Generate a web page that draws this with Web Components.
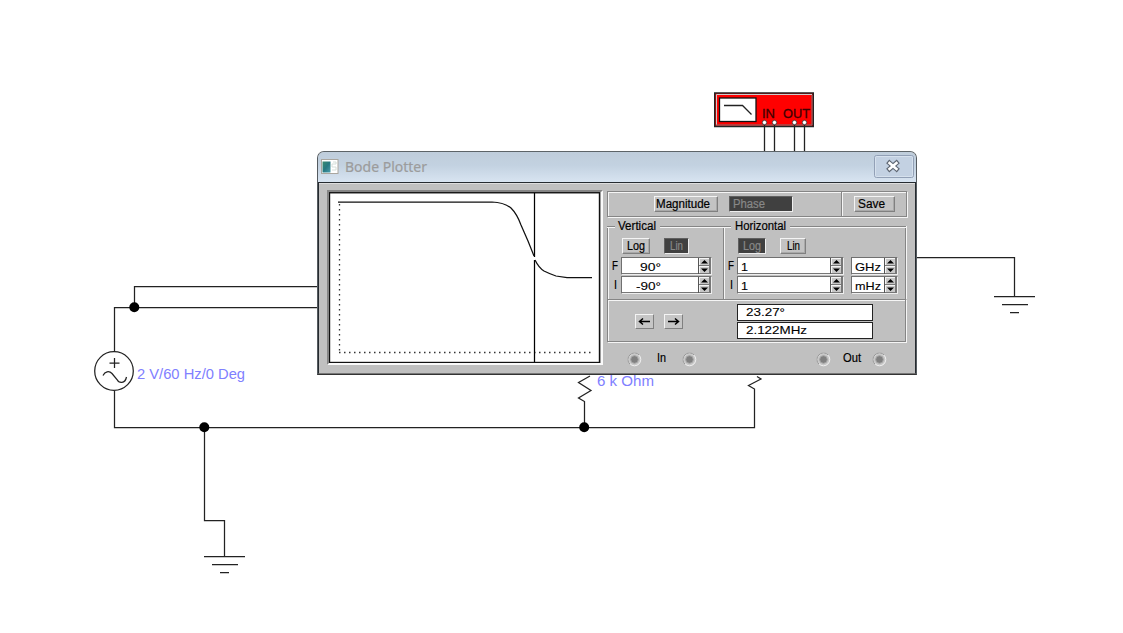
<!DOCTYPE html>
<html lang="en"><head><meta charset="utf-8"><title>Bode Plotter</title>
<style>
html,body{margin:0;background:#fff}
body{width:1123px;height:633px;overflow:hidden;font-family:"Liberation Sans",Arial,sans-serif}
</style></head><body>
<circuit-board><bode-window></bode-window></circuit-board>
<script>
const define=(name,render)=>customElements.define(name,class extends HTMLElement{
  connectedCallback(){
    if(this.shadowRoot)return;
    const t=document.createElement('template');
    t.innerHTML=render(this);
    this.attachShadow({mode:'open'}).append(t.content.cloneNode(true));
  }
});
const at=(e,n,d='')=>e.getAttribute(n)??d;

/* text run with a fixed advance width */
define('fit-text',e=>{
  const w=+at(e,'w'),s=+at(e,'size','12');
  return `<style>:host{display:block;flex:none;width:${w}px;height:14px}svg{display:block;overflow:visible}</style>
  <svg width="${w}" height="14"><text x="0" y="11" font-size="${s}" fill="${at(e,'color','#000')}" stroke="${at(e,'color','#000')}" stroke-width="${at(e,'bold','.2')}" font-family="${at(e,'font','Liberation Sans')}, sans-serif" textLength="${w}" lengthAdjust="spacingAndGlyphs">${at(e,'text')}</text></svg>`});

define('push-button',e=>{
  const dark=e.hasAttribute('down');
  return `<style>:host{display:flex;flex:none;box-sizing:border-box;width:${at(e,'w')}px;height:16px;align-items:center;justify-content:center;
  background:${dark?'#404040':'#c3c3c3'};border:1px solid;border-color:${dark?'#606060 #eee #eee #606060':'#f4f4f4 #808080 #808080 #f4f4f4'};
  box-shadow:${dark?'none':'inset -1px -1px #a9a9a9'}}</style>
  <fit-text text="${at(e,'text')}" w="${at(e,'tw')}" color="${dark?'#888':'#000'}"></fit-text>`});

define('arrow-button',e=>`<style>:host{display:block;flex:none;box-sizing:border-box;width:19px;height:15px;background:#c6c6c6;border:1px solid;border-color:#f4f4f4 #808080 #808080 #f4f4f4}svg{display:block;${e.hasAttribute('right')?'transform:scaleX(-1)':''}}</style>
  <svg width="17" height="13"><path d="M3.5 6.5H14M7 3.5L3.5 6.5 7 9.5" fill="none" stroke="#000" stroke-width="1.5"/></svg>`);

define('spin-field',e=>`<style>
  :host{display:flex;flex:none;box-sizing:border-box;width:${at(e,'w')}px;height:18px;border:1px solid #707070;border-right-color:#eee;border-bottom-color:#eee;background:#fff}
  .v{flex:1;box-sizing:border-box;padding:2px 0 0 ${at(e,'pad','3')}px;border-bottom:1px solid #777}
  .s{width:13px;box-sizing:border-box;border-left:1px solid #555;border-right:1px solid #777;background:#c8c8c8}
  svg{display:block}</style>
  <div class="v"><fit-text text="${at(e,'text')}" w="${at(e,'tw')}" size="11.5" bold="0.1"></fit-text></div>
  <div class="s"><svg width="11" height="16"><path d="M0 .5H10M.5 0V16M0 8.5H10" stroke="#f4f4f4" fill="none"/><path d="M0 7.5H11M0 15.5H11M10.5 0V16" stroke="#777"/><path d="M2 5.5L5.5 2 9 5.5ZM2 10.5H9L5.5 14Z"/></svg></div>`);

define('read-out',e=>`<style>:host{display:block;box-sizing:border-box;width:136px;height:17px;border:1.5px solid #222;background:#fff;padding:0 0 0 8px}</style>
  <fit-text text="${at(e,'text')}" w="${at(e,'tw')}" size="11.5" bold="0.1"></fit-text>`);

define('jack-port',()=>`<style>:host{display:block;flex:none;width:15px;height:15px}svg{display:block}</style>
  <svg width="15" height="15"><circle cx="7.5" cy="7.5" r="6.3" fill="#c8c8c8" stroke="#f0f0f0"/><path d="M2.9 12.1A6.5 6.5 0 0 1 12.1 2.9" fill="none" stroke="#999"/><circle cx="7.5" cy="7.5" r="3.8" fill="#808080" stroke="#a4a4a4"/></svg>`);

define('group-box',e=>`<style>
  :host{display:block;flex:none;box-sizing:border-box;width:${at(e,'w')}px;height:80px}
  .head{display:flex;height:14px;align-items:center}
  i{height:1px;background:#858585;box-shadow:0 1px #f5f5f5}
  .a{width:8px;margin-right:${at(e,'gap','3')}px}.b{flex:1;margin-left:4px}
  .body{height:73px;margin-top:-7px;box-sizing:border-box;border-left:1px solid #858585;box-shadow:inset 1px 0 #f5f5f5;padding-top:12px}
  :host([last]) .body{border-right:1px solid #858585;box-shadow:inset 1px 0 #f5f5f5,1px 0 #f5f5f5}
  </style><div class="head"><i class="a"></i><fit-text text="${at(e,'text')}" w="${at(e,'tw')}"></fit-text><i class="b"></i></div><div class="body"><slot></slot></div>`);

define('bode-graph',()=>`<style>:host{display:block;flex:none;box-sizing:border-box;width:276px;height:175px;border:2px solid;border-color:#858585 #fafafa #fafafa #858585}svg{display:block}</style>
  <svg width="272" height="171" viewBox="329 192 272 171"><rect x="329.5" y="192.75" width="270" height="169.75" fill="#fff" stroke="#111" stroke-width="1.4"/>
  <path d="M339.5 204V352" stroke="#333" stroke-width="1.3" stroke-dasharray="1.5 3.5"/>
  <path d="M339 352.5H592" stroke="#333" stroke-width="1.3" stroke-dasharray="1.5 3.5"/>
  <path d="M534.5 193V257M534.5 260V362" stroke="#000" stroke-width="1.25"/>
  <path d="M338 202H492Q504 202.5 511 208Q517 214 521 225L528 241L534 256M535 260Q539 268 544 271Q550 274 556 276L567 277.5H592" fill="none" stroke="#111" stroke-width="1.25"/></svg>`);

define('control-panel',()=>`<style>
  :host{display:block;flex:none;width:300px}
  .top{box-sizing:border-box;height:26px;border:1px solid #858585;box-shadow:inset 1px 1px #f5f5f5,1px 1px #f5f5f5;display:flex;align-items:center;padding-left:46px}
  .gap{width:11px}.rule{width:1px;height:24px;background:#858585;box-shadow:1px 0 #f5f5f5;margin:0 12px 0 48px}
  .frame{height:124px;box-sizing:border-box;width:299px;margin-top:2px}
  .groups{display:flex;height:80px}
  .modes{display:flex;gap:14px;padding-left:14px;margin-bottom:2px}
  .row{display:flex;align-items:center;height:19px;padding-left:4px}
  .unit{margin-left:7px}.lab{width:9px;display:flex;box-sizing:border-box}.i{padding-left:2px}
  .bottom{height:43px;box-sizing:border-box;border:1px solid #858585;box-shadow:inset 1px 1px #f5f5f5,1px 1px #f5f5f5;display:flex}
  .arrows{display:flex;gap:10px;padding:14px 54px 0 27px}
  .outs{display:flex;flex-direction:column;gap:1px;padding-top:4px}
  .jacks{height:30px;display:flex;align-items:center;padding-left:20px;margin-top:1px}
  .in{margin:0 16px 2px 15px}.out{margin:0 11px 2px 12px}.space{width:119px}
  .left{justify-content:flex-start;padding-left:3px}.mag{justify-content:flex-start;padding-left:1px}.save{justify-content:flex-start;padding-left:3px}
  </style>
  <div class="top"><push-button class="mag" text="Magnitude" w="64" tw="54"></push-button><div class="gap"></div><push-button class="left" down text="Phase" w="64" tw="32"></push-button><div class="rule"></div><push-button class="save" text="Save" w="41" tw="27"></push-button></div>
  <div class="frame">
  <div class="groups">
   <group-box w="116" text="Vertical" tw="38"><div class="modes"><push-button text="Log" w="28" tw="18"></push-button><push-button down text="Lin" w="25" tw="13"></push-button></div>
    <div class="row"><div class="lab"><fit-text text="F" w="6"></fit-text></div><spin-field w="91" text="90°" tw="21" pad="18"></spin-field></div>
    <div class="row"><div class="lab i"><fit-text text="I" w="3"></fit-text></div><spin-field w="91" text="-90°" tw="25" pad="14"></spin-field></div></group-box>
   <group-box last w="183" text="Horizontal" tw="51" gap="4"><div class="modes"><push-button down text="Log" w="28" tw="18"></push-button><push-button text="Lin" w="26" tw="13"></push-button></div>
    <div class="row"><div class="lab"><fit-text text="F" w="6"></fit-text></div><spin-field w="107" text="1" tw="7"></spin-field><spin-field class="unit" w="47" text="GHz" tw="26"></spin-field></div>
    <div class="row"><div class="lab i"><fit-text text="I" w="3"></fit-text></div><spin-field w="107" text="1" tw="7"></spin-field><spin-field class="unit" w="47" text="mHz" tw="26"></spin-field></div></group-box>
  </div>
  <div class="bottom"><div class="arrows"><arrow-button></arrow-button><arrow-button right></arrow-button></div><div class="outs"><read-out text="23.27°" tw="39"></read-out><read-out text="2.122MHz" tw="61"></read-out></div></div>
  </div>
  <div class="jacks"><jack-port></jack-port><fit-text class="in" text="In" w="9"></fit-text><jack-port></jack-port><div class="space"></div><jack-port></jack-port><fit-text class="out" text="Out" w="18"></fit-text><jack-port></jack-port></div>`);

define('title-bar',()=>`<style>
  :host{display:flex;box-sizing:border-box;height:30px;align-items:center;padding:0 2px 0 3px;background:linear-gradient(#bfcddb,#c3d2e1 45%,#d8e4f1)}
  .icon{display:block;margin:-1px 6px 0 0}.close{display:block;margin-left:auto;margin-top:-1px}
  fit-text{margin-top:2px}
  </style>
  <svg class="icon" width="18" height="15"><defs><linearGradient id="g" x2="1" y2="1"><stop stop-color="#398b70"/><stop offset=".5" stop-color="#267982"/><stop offset="1" stop-color="#4b9cac"/></linearGradient></defs><rect x=".5" y=".5" width="16.5" height="14" fill="#fff" stroke="#aaa69f"/><rect x="1.5" y="2.5" width="8" height="11" fill="url(#g)"/><path d="M12 3H15V5H11V8H15V11H11" fill="none" stroke="#d4ded9"/></svg>
  <fit-text text="Bode Plotter" w="82" size="14" color="#9c9c9c" bold=".2" font="Noto Sans"></fit-text>
  <svg class="close" width="40" height="23"><rect x=".5" y=".5" width="39" height="22" rx="2" fill="#c3d1e2" stroke="#92a0b6"/><rect x="1.5" y="1.5" width="37" height="20" rx="1" fill="none" stroke="#d6e1ed"/><path d="M15.5 8L22.5 14M22.5 8L15.5 14" stroke="#606874" stroke-width="4.8" stroke-linecap="square"/><path d="M15.5 8L22.5 14M22.5 8L15.5 14" stroke="#fff" stroke-width="2.5" stroke-linecap="square"/></svg>`);

define('bode-window',()=>`<style>
  :host{display:block;box-sizing:border-box;width:600px;height:224px;border:1px solid #555b60;border-top-color:#5d6468;border-bottom-color:#333;border-radius:7px 7px 0 0;overflow:hidden;background:#c0c0c0}
  .client{box-sizing:border-box;height:192px;border:1px solid #262b30;border-bottom-color:#777;padding:7px 0 0 8px;display:flex;gap:4px;box-shadow:inset 0 1px #ddd}
  control-panel{padding-top:1px}
  </style><title-bar></title-bar><div class="client"><bode-graph></bode-graph><control-panel></control-panel></div>`);

/* free schematic canvas with the instrument window floating above it */
define('circuit-board',()=>`<style>
  :host{display:block;position:relative;width:1123px;height:633px;background:#fff}
  svg{display:block}::slotted(bode-window){position:absolute;left:317px;top:151px}
  </style><svg width="1123" height="633" font-family="Liberation Sans, sans-serif">
  <g fill="none" stroke="#222" stroke-width="1.25">
   <path d="M134.5 308V286.5H320M320 307.5H114.5V352M114.5 391V427.5H754.5V389L748.5 385.5 761 379 757 376.5"/>
   <path d="M204.5 428V520.5H224.5V556M204 556.5H245M212 564.5H238M220 572.5H229"/>
   <path d="M915 257.5H1014.5V296M994 296.5H1035M1002 304.5H1028M1010 312.5H1019"/>
   <path d="M584.5 427V401.5L578.5 398 591 390.5 578.5 382.5 590 376"/>
   <circle cx="114" cy="371" r="19.3" fill="#fff"/><path d="M109.5 363H119.5M114.5 358V368M103 375.5C105 371.5 109 370.5 112 373.5L117 379.5C119 383.5 125 384 126.5 377"/>
  </g>
  <g fill="#000"><circle cx="134.3" cy="307.3" r="5"/><circle cx="204.3" cy="427.3" r="5"/><circle cx="584.2" cy="427.3" r="5"/></g>
  <g fill="#8080ff" font-size="15"><text x="137" y="378.5" textLength="108" lengthAdjust="spacingAndGlyphs">2 V/60 Hz/0 Deg</text><text x="597" y="386" textLength="57" lengthAdjust="spacingAndGlyphs">6 k Ohm</text></g>
  <rect x="714.75" y="93" width="98.5" height="33.5" fill="#f00" stroke="#222" stroke-width="1.5"/><path d="M716.5 125V94.5H812" fill="none" stroke="#ccc"/><path d="M716 125H812V95" fill="none" stroke="#777"/>
  <rect x="719.5" y="98" width="36.5" height="23.5" fill="#fff" stroke="#111" stroke-width="1.3"/><path d="M724 105.5H742.5L751.5 114.5" fill="none" stroke="#222" stroke-width="1.3"/>
  <g font-size="13.5" fill="#400000" stroke="#400000" stroke-width=".3"><text x="762" y="118" textLength="13" lengthAdjust="spacingAndGlyphs">IN</text><text x="783" y="118" textLength="27" lengthAdjust="spacingAndGlyphs">OUT</text></g>
  <path d="M764.5 124V152M774.5 124V152M794.5 124V152M804.5 124V152" stroke="#222" stroke-width="1.3"/>
  <g fill="#fff" stroke="#333" stroke-width=".8"><circle cx="764.5" cy="122.5" r="2.2"/><circle cx="774.5" cy="122.5" r="2.2"/><circle cx="794.5" cy="122.5" r="2.2"/><circle cx="804.5" cy="122.5" r="2.2"/></g>
  </svg><slot></slot>`);
</script></body></html>
